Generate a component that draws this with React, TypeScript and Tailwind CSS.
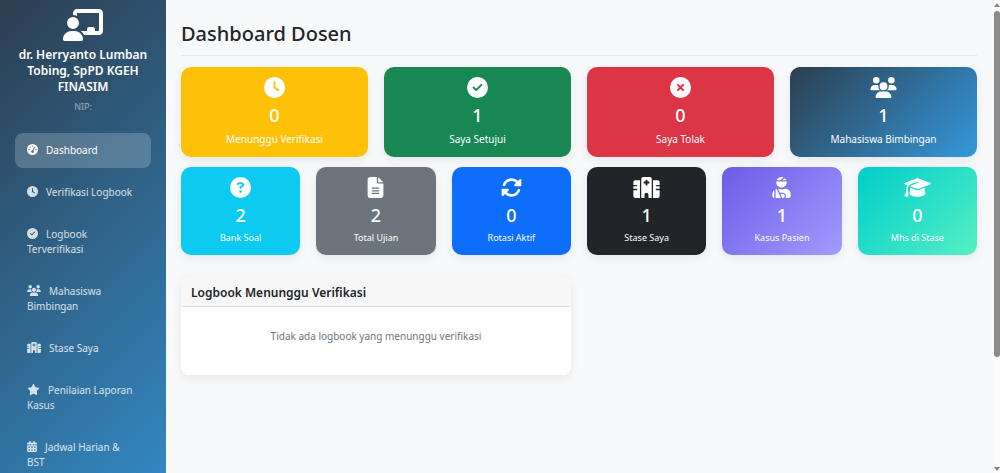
import type { IconType } from 'react-icons';
import { FaUserInjured } from 'react-icons/fa';
import {
  FaCalendarDays,
  FaChalkboardUser,
  FaCircleCheck,
  FaCircleQuestion,
  FaCircleXmark,
  FaClock,
  FaFileLines,
  FaGaugeHigh,
  FaGraduationCap,
  FaRotate,
  FaStar,
  FaUsers,
} from 'react-icons/fa6';

interface NavItem {
  label: string;
  icon: IconType;
  iconWidth: string;
  active?: boolean;
}

interface Stat {
  label: string;
  value: number;
  icon: IconType;
  iconWidth: string;
  color: string;
}

// Three separate wings, the middle one taller with a cross and a door
const HospitalIcon: IconType = ({ className }) => (
  <svg className={className} viewBox="0 0 640 512" fill="currentColor" aria-hidden="true">
    <path d="M48 80H160V512H48c-26.500 0-48-21.500-48-48V320H80c8.800 0 16-7.200 16-16s-7.200-16-16-16H0V224H80c8.800 0 16-7.200 16-16s-7.200-16-16-16H0V128c0-26.500 21.500-48 48-48z" />
    <path d="M592 80H480V512H592c26.500 0 48-21.500 48-48V320H560c-8.800 0-16-7.200-16-16s7.200-16 16-16h80V224H560c-8.800 0-16-7.200-16-16s7.200-16 16-16h80V128c0-26.500-21.500-48-48-48z" />
    <path
      fillRule="evenodd"
      d="M192 48c0-26.500 21.500-48 48-48H400c26.500 0 48 21.500 48 48V512H368V432c0-26.500-21.500-48-48-48s-48 21.500-48 48v80H192V48zM296 80v32H264c-9 0-16 7-16 16v16c0 9 7 16 16 16h32v32c0 9 7 16 16 16h16c9 0 16-7 16-16V160h32c9 0 16-7 16-16V128c0-9-7-16-16-16H344V80c0-9-7-16-16-16H312c-9 0-16 7-16 16z"
    />
  </svg>
);

const navItems: NavItem[] = [
  { label: 'Dashboard', icon: FaGaugeHigh, iconWidth: 'w-[11px]', active: true },
  { label: 'Verifikasi Logbook', icon: FaClock, iconWidth: 'w-[11px]' },
  { label: 'Logbook Terverifikasi', icon: FaCircleCheck, iconWidth: 'w-[11px]' },
  { label: 'Mahasiswa Bimbingan', icon: FaUsers, iconWidth: 'w-[14px]' },
  { label: 'Stase Saya', icon: HospitalIcon, iconWidth: 'w-[14px]' },
  { label: 'Penilaian Laporan Kasus', icon: FaStar, iconWidth: 'w-[13px]' },
  { label: 'Jadwal Harian & BST', icon: FaCalendarDays, iconWidth: 'w-[10px]' },
];

const logbookStats: Stat[] = [
  {
    label: 'Menunggu Verifikasi',
    value: 0,
    icon: FaClock,
    iconWidth: 'w-[21px]',
    color: 'bg-[#ffc107]',
  },
  {
    label: 'Saya Setujui',
    value: 1,
    icon: FaCircleCheck,
    iconWidth: 'w-[21px]',
    color: 'bg-[#198754]',
  },
  {
    label: 'Saya Tolak',
    value: 0,
    icon: FaCircleXmark,
    iconWidth: 'w-[21px]',
    color: 'bg-[#dc3545]',
  },
  {
    label: 'Mahasiswa Bimbingan',
    value: 1,
    icon: FaUsers,
    iconWidth: 'w-[27px]',
    color: 'bg-[linear-gradient(135deg,#2c3e50,#3498db)]',
  },
];

const otherStats: Stat[] = [
  {
    label: 'Bank Soal',
    value: 2,
    icon: FaCircleQuestion,
    iconWidth: 'w-[21px]',
    color: 'bg-[#0dcaf0]',
  },
  {
    label: 'Total Ujian',
    value: 2,
    icon: FaFileLines,
    iconWidth: 'w-[21px]',
    color: 'bg-[#6c757d]',
  },
  {
    label: 'Rotasi Aktif',
    value: 0,
    icon: FaRotate,
    iconWidth: 'w-[21px]',
    color: 'bg-[#0d6efd]',
  },
  {
    label: 'Stase Saya',
    value: 1,
    icon: HospitalIcon,
    iconWidth: 'w-[27px]',
    color: 'bg-[#212529]',
  },
  {
    label: 'Kasus Pasien',
    value: 1,
    icon: FaUserInjured,
    iconWidth: 'w-[21px]',
    color: 'bg-[linear-gradient(135deg,#6c5ce7,#a29bfe)]',
  },
  {
    label: 'Mhs di Stase',
    value: 0,
    icon: FaGraduationCap,
    iconWidth: 'w-[27px]',
    color: 'bg-[linear-gradient(135deg,#00cec9,#55efc4)]',
  },
];

function Sidebar() {
  return (
    <aside className="w-[166px] shrink-0 self-start min-h-screen px-[15px] pt-[9px] pb-36 bg-[linear-gradient(135deg,#2c3e50,#3498db)] text-white">
      <div className="text-center">
        <FaChalkboardUser className="mx-auto h-8 w-10" />
        <h2 className="mt-[6px] text-xs leading-4 font-semibold">
          dr. Herryanto Lumban Tobing, SpPD KGEH FINASIM
        </h2>
        <p className="mt-1 text-[9px] leading-4 text-white/50">NIP:</p>
      </div>

      <nav className="mt-[18px] flex flex-col gap-[7px]">
        {navItems.map((item) => (
          <a
            key={item.label}
            href="#"
            className={`block rounded-lg px-3 py-[10px] text-[10px] leading-[15px] ${
              item.active ? 'bg-white/20 text-white' : 'text-white/80'
            }`}
          >
            <item.icon
              className={`mr-2 inline-block h-[11px] align-[-1px] ${item.iconWidth}`}
            />
            {item.label}
          </a>
        ))}
      </nav>
    </aside>
  );
}

function StatCard({ stat, compact }: { stat: Stat; compact?: boolean }) {
  return (
    <div
      className={`rounded-[10px] py-[10px] text-center text-white shadow-[0_3px_10px_rgba(0,0,0,0.08)] ${stat.color}`}
    >
      <stat.icon className={`mx-auto h-[21px] ${stat.iconWidth}`} />
      <p className="mt-[5px] text-lg leading-6 font-medium">{stat.value}</p>
      <p
        className={
          compact ? 'mt-1 text-[9px] leading-[14px]' : 'mt-1 text-[10px] leading-4'
        }
      >
        {stat.label}
      </p>
    </div>
  );
}

function Scrollbar() {
  return (
    <div className="flex w-[6px] shrink-0 flex-col items-center bg-[#fcfcfc]" aria-hidden="true">
      <svg className="mt-[3px] h-1 w-[6px] fill-[#858585]" viewBox="0 0 6 4">
        <path d="M3 0 6 4H0z" />
      </svg>
      <div className="mt-1 h-[346px] w-full rounded-full bg-[#8b8b8b]" />
      <svg className="mt-auto mb-[2px] h-1 w-[6px] fill-[#858585]" viewBox="0 0 6 4">
        <path d="M0 0h6L3 4z" />
      </svg>
    </div>
  );
}

export default function App() {
  return (
    <div className="flex h-screen overflow-hidden bg-[#f8f9fa] font-['Noto_Sans',sans-serif] text-[#212529]">
      <Sidebar />

      <main className="min-w-0 flex-1 pt-5 pr-[17px] pl-[15px]">
        <h1 className="border-b border-[#e6e8ea] pb-[7px] text-xl leading-7 font-medium">
          Dashboard Dosen
        </h1>

        <div className="mt-[11px] grid grid-cols-4 gap-4">
          {logbookStats.map((stat) => (
            <StatCard key={stat.label} stat={stat} />
          ))}
        </div>

        <div className="mt-[10px] grid grid-cols-6 gap-4">
          {otherStats.map((stat) => (
            <StatCard key={stat.label} stat={stat} compact />
          ))}
        </div>

        <div className="mt-[22px] grid grid-cols-2 gap-4">
          <section className="overflow-hidden rounded-lg bg-white shadow-[0_3px_10px_rgba(0,0,0,0.08)]">
            <h2 className="border-b border-[#dcdddd] bg-[#f7f7f7] px-[10px] pt-[7px] pb-1 text-xs leading-[18px] font-semibold">
              Logbook Menunggu Verifikasi
            </h2>
            <p className="px-[10px] pt-[21px] pb-[31px] text-center text-[10px] leading-4 text-[#6c757d]">
              Tidak ada logbook yang menunggu verifikasi
            </p>
          </section>
        </div>
      </main>

      <Scrollbar />
    </div>
  );
}
